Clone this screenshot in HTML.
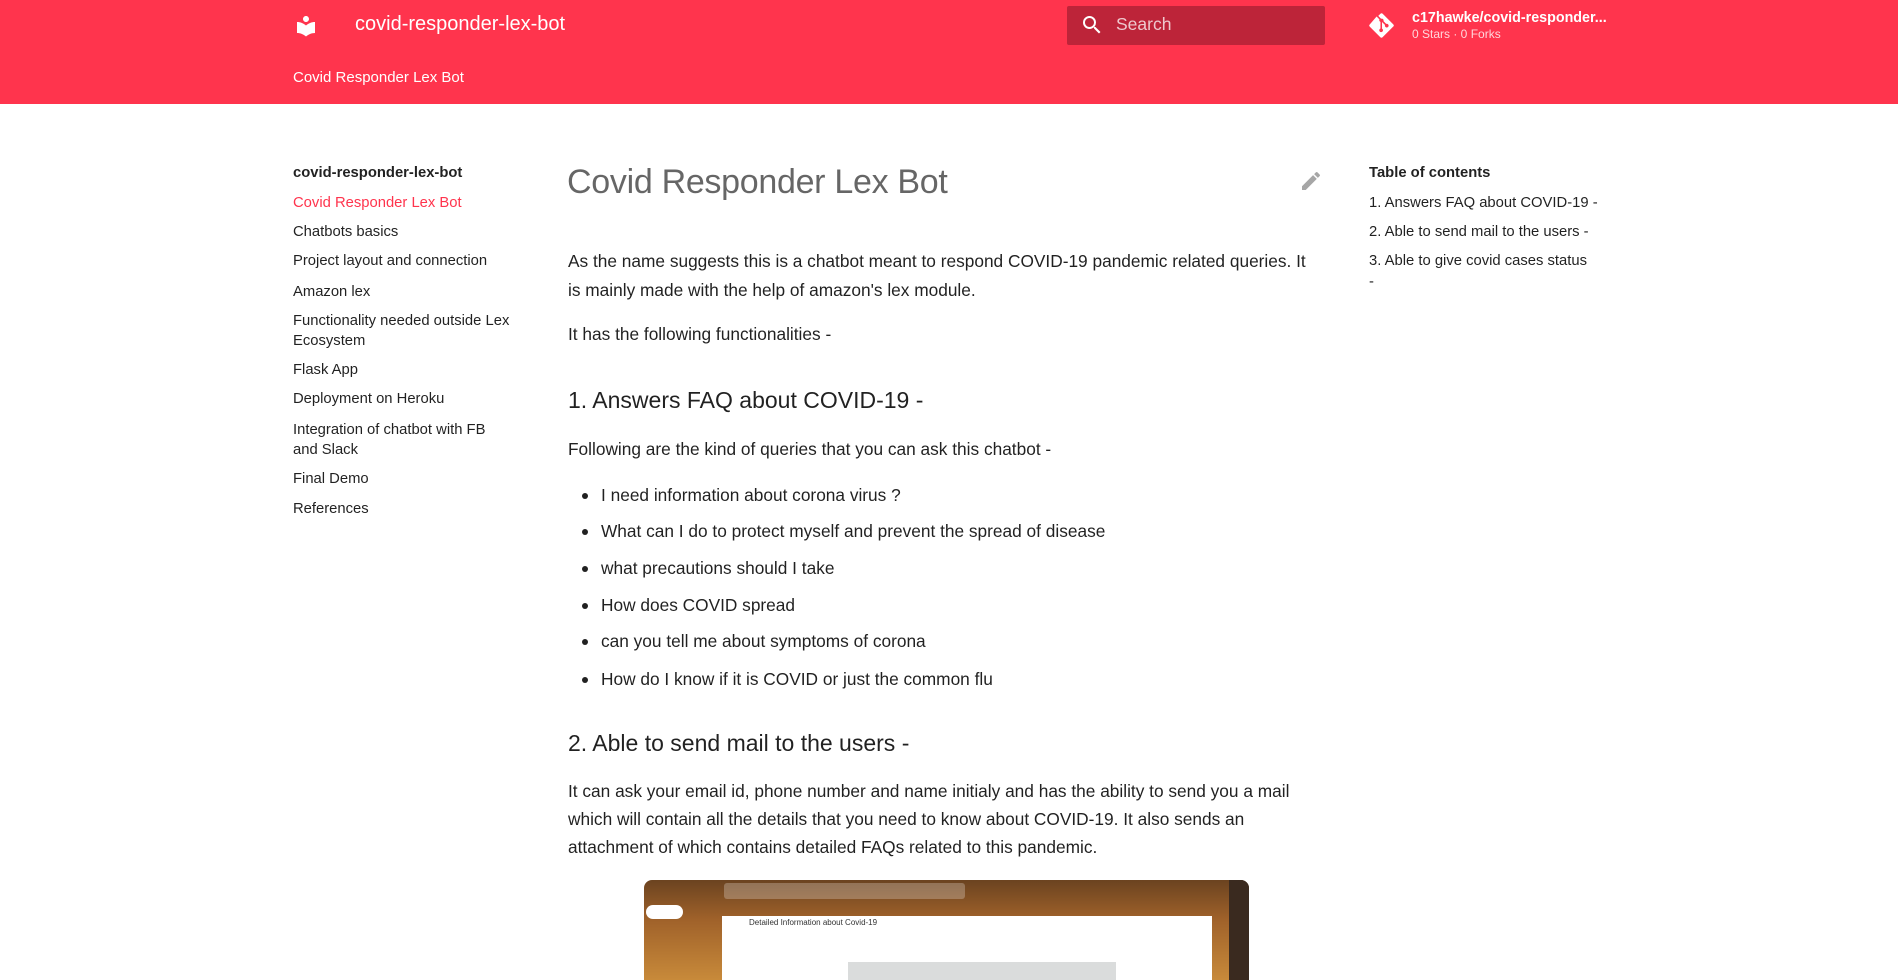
<!DOCTYPE html>
<html><head><meta charset="utf-8"><style>
*{margin:0;padding:0;box-sizing:border-box}
body{width:1898px;height:975px;overflow:hidden;background:#fff;font-family:"Liberation Sans",sans-serif;color:rgba(0,0,0,.87);position:relative}
.hd{position:absolute;left:0;top:0;width:1898px;height:104px;background:#ff344d}
.a{position:absolute;white-space:nowrap}
.w{color:#fff}
.nav{font-size:14.8px;color:rgba(0,0,0,.87)}
.p{font-size:17.3px;line-height:28px}
.h2{font-size:23px}
.li::before{content:"";position:absolute;left:-19px;top:12px;width:6px;height:6px;border-radius:50%;background:rgba(0,0,0,.87)}
</style></head><body>
<div class="hd"></div>
<svg class="a" style="left:294px;top:14px" width="24" height="24" viewBox="0 0 24 24"><path fill="#fff" d="M12 11.55C9.64 9.35 6.48 8 3 8v11c3.48 0 6.64 1.35 9 3.55 2.36-2.19 5.52-3.55 9-3.55V8c-3.48 0-6.64 1.35-9 3.55zM12 8c1.66 0 3-1.34 3-3s-1.34-3-3-3-3 1.34-3 3 1.34 3 3 3z"/></svg>
<div class="a w" style="left:355px;top:13px;font-size:20px">covid-responder-lex-bot</div>
<div class="a w" style="left:293px;top:69px;font-size:15px">Covid Responder Lex Bot</div>
<div class="a" style="left:1067px;top:6px;width:258px;height:39px;background:#bd2439;border-radius:2px"></div>
<svg class="a" style="left:1080px;top:13px" width="24" height="24" viewBox="0 0 24 24"><path fill="#fff" d="M15.5 14h-.79l-.28-.27A6.47 6.47 0 0 0 16 9.5 6.5 6.5 0 1 0 9.5 16c1.61 0 3.09-.59 4.23-1.57l.27.28v.79l5 4.99L20.49 19l-4.99-5zm-6 0C7.01 14 5 11.99 5 9.5S7.01 5 9.5 5 14 7.01 14 9.5 11.99 14 9.5 14z"/></svg>
<div class="a" style="left:1116px;top:14px;font-size:17.5px;color:rgba(255,255,255,.75)">Search</div>
<svg class="a" style="left:1369px;top:13px" width="25" height="25" viewBox="0 0 24 24"><path fill="#fff" d="M23.3 10.9 13.1.7a1.5 1.5 0 0 0-2.1 0L8.9 2.8l2.7 2.7a1.8 1.8 0 0 1 2.3 2.3l2.6 2.6a1.8 1.8 0 1 1-1.1 1 1.8 1.8 0 0 1-.4-.3L12.5 8.6v6.4a1.8 1.8 0 1 1-1.5-.1V8.5a1.8 1.8 0 0 1-1-2.4L7.3 3.4.7 11a1.5 1.5 0 0 0 0 2.1l10.2 10.2a1.5 1.5 0 0 0 2.1 0l10.2-10.2a1.5 1.5 0 0 0 .1-2.2z"/></svg>
<div class="a w" style="left:1412px;top:10px;font-size:14.3px;font-weight:bold">c17hawke/covid-responder...</div>
<div class="a" style="left:1412px;top:27px;font-size:12px;color:rgba(255,255,255,.8)">0 Stars · 0 Forks</div>

<div class="a nav" style="left:293px;top:165px;font-weight:bold">covid-responder-lex-bot</div>
<div class="a nav" style="left:293px;top:195px;color:#ff344d">Covid Responder Lex Bot</div>
<div class="a nav" style="left:293px;top:224px">Chatbots basics</div>
<div class="a nav" style="left:293px;top:253px">Project layout and connection</div>
<div class="a nav" style="left:293px;top:284px">Amazon lex</div>
<div class="a nav" style="left:293px;top:313px">Functionality needed outside Lex</div>
<div class="a nav" style="left:293px;top:333px">Ecosystem</div>
<div class="a nav" style="left:293px;top:362px">Flask App</div>
<div class="a nav" style="left:293px;top:391px">Deployment on Heroku</div>
<div class="a nav" style="left:293px;top:422px">Integration of chatbot with FB</div>
<div class="a nav" style="left:293px;top:442px">and Slack</div>
<div class="a nav" style="left:293px;top:471px">Final Demo</div>
<div class="a nav" style="left:293px;top:501px">References</div>

<div class="a nav" style="left:1369px;top:165px;font-weight:bold">Table of contents</div>
<div class="a nav" style="left:1369px;top:195px">1. Answers FAQ about COVID-19 -</div>
<div class="a nav" style="left:1369px;top:224px">2. Able to send mail to the users -</div>
<div class="a nav" style="left:1369px;top:253px">3. Able to give covid cases status</div>
<div class="a nav" style="left:1369px;top:274px">-</div>

<div class="a" style="left:567px;top:163px;font-size:34px;color:rgba(0,0,0,.6);letter-spacing:-0.3px">Covid Responder Lex Bot</div>
<svg class="a" style="left:1299px;top:169px" width="24" height="24" viewBox="0 0 24 24"><path fill="rgba(0,0,0,.35)" d="M20.71 7.04c.39-.39.39-1.04 0-1.41l-2.34-2.34c-.37-.39-1.02-.39-1.41 0l-1.84 1.83 3.75 3.75M3 17.25V21h3.75L17.81 9.93l-3.75-3.75L3 17.25z"/></svg>
<div class="a p" style="left:568px;top:247px">As the name suggests this is a chatbot meant to respond COVID-19 pandemic related queries. It</div>
<div class="a p" style="left:568px;top:276px">is mainly made with the help of amazon's lex module.</div>
<div class="a p" style="left:568px;top:320px">It has the following functionalities -</div>
<div class="a h2" style="left:568px;top:387px">1. Answers FAQ about COVID-19 -</div>
<div class="a p" style="left:568px;top:435px">Following are the kind of queries that you can ask this chatbot -</div>
<div class="a p li" style="left:601px;top:481px">I need information about corona virus ?</div>
<div class="a p li" style="left:601px;top:517px">What can I do to protect myself and prevent the spread of disease</div>
<div class="a p li" style="left:601px;top:554px">what precautions should I take</div>
<div class="a p li" style="left:601px;top:591px">How does COVID spread</div>
<div class="a p li" style="left:601px;top:627px">can you tell me about symptoms of corona</div>
<div class="a p li" style="left:601px;top:665px">How do I know if it is COVID or just the common flu</div>
<div class="a h2" style="left:568px;top:730px">2. Able to send mail to the users -</div>
<div class="a p" style="left:568px;top:777px">It can ask your email id, phone number and name initialy and has the ability to send you a mail</div>
<div class="a p" style="left:568px;top:805px">which will contain all the details that you need to know about COVID-19. It also sends an</div>
<div class="a p" style="left:568px;top:833px">attachment of which contains detailed FAQs related to this pandemic.</div>

<div class="a" style="left:644px;top:880px;width:605px;height:100px;border-radius:8px 8px 0 0;background:linear-gradient(180deg,#6b4320,#a0622a 40%,#c88a3a);overflow:hidden">
<div style="position:absolute;left:80px;top:3px;width:241px;height:16px;background:rgba(255,255,255,.25);border-radius:3px"></div>
<div style="position:absolute;left:2px;top:25px;width:37px;height:14px;background:#fff;border-radius:8px"></div>
<div style="position:absolute;left:78px;top:36px;width:490px;height:70px;background:#fff"></div>
<div style="position:absolute;left:105px;top:38px;font-size:8px;color:#333">Detailed Information about Covid-19</div>
<div style="position:absolute;left:204px;top:82px;width:268px;height:20px;background:#dadcdc"></div>
<div style="position:absolute;left:585px;top:0;width:20px;height:100px;background:#3a2a1f"></div>
</div>
</body></html>
